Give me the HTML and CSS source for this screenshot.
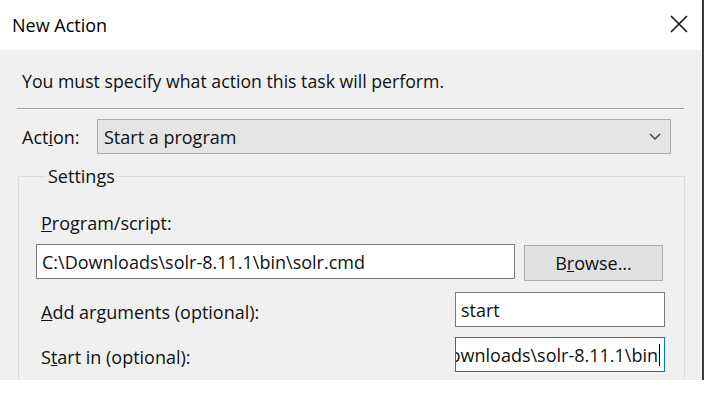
FILE: index.html
```html
<!DOCTYPE html>
<html lang="en">
<head>
    <meta charset="UTF-8">
    <title>New Action</title>
    <link rel="stylesheet" href="styles.css">
</head>
<body>
    <div class="window">
        <div class="title-bar">
            <span class="title">New Action</span>
            <svg class="close" width="18" height="18" viewBox="0 0 18 18">
                <path d="M1 1 L17 17 M17 1 L1 17" stroke="#111" stroke-width="1.6" fill="none"/>
            </svg>
        </div>

        <div class="content">
            <p class="intro">You must specify what action this task will perform.</p>
            <div class="separator"></div>

            <div class="action-row">
                <span class="label">Act<u>i</u>on:</span>
                <div class="select">
                    <span>Start a program</span>
                    <svg width="12" height="8" viewBox="0 0 12 8">
                        <path d="M1 1 L6 6 L11 1" stroke="#444" stroke-width="1.5" fill="none"/>
                    </svg>
                </div>
            </div>

            <fieldset class="settings">
                <legend>Settings</legend>

                <div class="label field-label"><u>P</u>rogram/script:</div>
                <div class="program-row">
                    <div class="field program-field">C:\Downloads\solr-8.11.1\bin\solr.cmd</div>
                    <button class="browse-btn">B<u>r</u>owse...</button>
                </div>

                <div class="option-row">
                    <span class="label field-label"><u>A</u>dd arguments (optional):</span>
                    <div class="field small-field">start</div>
                </div>

                <div class="option-row">
                    <span class="label field-label">S<u>t</u>art in (optional):</span>
                    <div class="field small-field focused">
                        <span class="scrolled">C:\Downloads\solr-8.11.1\bin</span><span class="caret"></span>
                    </div>
                </div>
            </fieldset>
        </div>
    </div>
</body>
</html>
```

FILE: styles.css
```css
* {
    margin: 0;
    padding: 0;
    box-sizing: border-box;
    font-family: 'Open Sans', 'Noto Sans', sans-serif;
}

body {
    background-color: #fff;
    color: #111;
    font-size: 18px;
}

.window {
    width: 704px;
    height: 380px;
    border-right: 2px solid #3a3a3a;
    overflow: hidden;
}

.title-bar {
    height: 50px;
    background-color: #fff;
    display: flex;
    align-items: center;
    justify-content: space-between;
    padding: 0 14px 0 12px;
}

.title {
    font-size: 18px;
    color: #000;
    margin-top: -1px;
}

.close {
    margin-top: -2px;
}

.content {
    height: 330px;
    background-color: #f0f0f0;
    padding: 20px 0 0 17px;
}

.intro {
    font-size: 17.7px;
    line-height: 22px;
    padding-left: 5px;
}

.separator {
    width: 667px;
    margin-top: 16px;
    border-top: 1px solid #a0a0a0;
    border-bottom: 1px solid #fff;
}

.action-row {
    display: flex;
    align-items: center;
    margin-top: 9px;
    padding-left: 5px;
}

.label {
    font-size: 18px;
    line-height: 22px;
}

.action-row .label {
    width: 75px;
}

.select {
    width: 574px;
    height: 35px;
    background-color: #e5e5e5;
    border: 1px solid #adadad;
    display: flex;
    align-items: center;
    justify-content: space-between;
    padding: 0 9px 0 6px;
    font-size: 18px;
}

.settings {
    width: 667px;
    margin: 11px 0 0 1px;
    border: 1px solid #dcdcdc;
    padding: 25px 18px 40px 17px;
}

.settings legend {
    font-size: 18px;
    line-height: 22px;
    padding: 0 2px;
    margin-left: 10px;
}

.field-label {
    padding-left: 5px;
}

.program-row {
    display: flex;
    align-items: flex-start;
    margin-top: 10px;
}

.field {
    height: 35px;
    background-color: #fff;
    border: 1px solid #7a7a7a;
    font-size: 18px;
    display: flex;
    align-items: center;
    padding: 0 5px;
    white-space: nowrap;
    overflow: hidden;
}

.program-field {
    width: 479px;
}

.browse-btn {
    width: 139px;
    height: 36px;
    margin: 1px 0 0 9px;
    background-color: #e1e1e1;
    border: 1px solid #adadad;
    font-size: 18px;
    color: #111;
}

.option-row {
    display: flex;
    align-items: center;
    justify-content: space-between;
    margin-top: 11px;
    padding-right: 1px;
}

.option-row + .option-row {
    margin-top: 10px;
}

.option-row .label {
    margin-top: 4px;
}

.small-field {
    width: 210px;
}

.focused {
    border-color: #0078d7;
    justify-content: flex-end;
    padding-right: 4px;
}

.caret {
    display: inline-block;
    flex-shrink: 0;
    width: 1px;
    height: 22px;
    background-color: #000;
    margin-left: 1px;
}
```
